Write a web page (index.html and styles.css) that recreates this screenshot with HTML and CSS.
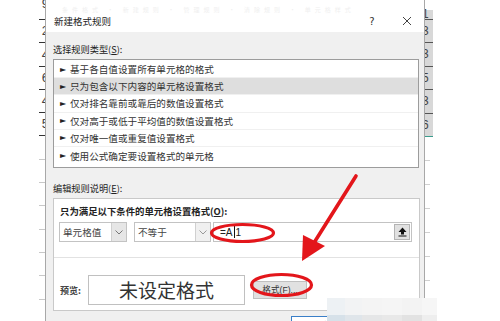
FILE: index.html
```html
<!DOCTYPE html>
<html>
    <head>
        <title>新建格式规则</title>
        <meta charset="utf-8" />
        <link rel="stylesheet" href="styles.css">
    </head>
    <body>
        <div class="page">
            <div class="sheet-left">
                <div class="row-num first"><span class="digit">9</span><span class="tick"></span></div>
                <div class="row-num"><span class="digit">2</span><span class="tick"></span></div>
                <div class="row-num"><span class="digit">4</span><span class="tick"></span></div>
                <div class="row-num"><span class="digit">6</span><span class="tick"></span></div>
                <div class="row-num"><span class="digit">4</span><span class="tick"></span></div>
                <div class="row-num"><span class="digit">5</span><span class="tick"></span></div>
                <div class="row-num faint"><span class="digit"></span><span class="tick"></span></div>
                <div class="row-num faint"><span class="digit"></span><span class="tick"></span></div>
                <div class="row-num faint"><span class="digit"></span><span class="tick"></span></div>
                <div class="row-num faint"><span class="digit"></span><span class="tick"></span></div>
                <div class="row-num faint"><span class="digit"></span><span class="tick"></span></div>
                <div class="row-num faint"><span class="digit"></span><span class="tick"></span></div>
                <div class="row-num faint"><span class="digit"></span><span class="tick"></span></div>
            </div>

            <div class="dialog">
                <div class="titlebar">
                    <div class="ghost">条件格式 · 新建规则 · 管理规则 · 清除规则 · 单元格样式</div>
                    <div class="title-row">
                        <span class="title">新建格式规则</span>
                        <span class="tb-btn">?</span>
                        <span class="tb-btn close">
                            <svg width="10" height="10" viewBox="0 0 10 10">
                                <path d="M1 1 L9 9 M9 1 L1 9" stroke="#444" stroke-width="1" fill="none" />
                            </svg>
                        </span>
                    </div>
                </div>

                <div class="body">
                    <div class="label first">选择规则类型(<u>S</u>):</div>
                    <ul class="rule-list">
                        <li><span class="tri">►</span>基于各自值设置所有单元格的格式</li>
                        <li class="selected"><span class="tri">►</span>只为包含以下内容的单元格设置格式</li>
                        <li><span class="tri">►</span>仅对排名靠前或靠后的数值设置格式</li>
                        <li><span class="tri">►</span>仅对高于或低于平均值的数值设置格式</li>
                        <li><span class="tri">►</span>仅对唯一值或重复值设置格式</li>
                        <li><span class="tri">►</span>使用公式确定要设置格式的单元格</li>
                    </ul>

                    <div class="label second">编辑规则说明(<u>E</u>):</div>
                    <div class="desc">
                        <div class="desc-title">只为满足以下条件的单元格设置格式(<u>O</u>):</div>
                        <div class="cond-row">
                            <div class="select s1">
                                <span class="sel-text">单元格值</span>
                                <span class="drop">
                                    <svg width="8" height="5" viewBox="0 0 8 5"><path d="M0.5 0.5 L4 4 L7.5 0.5" stroke="#777" fill="none" /></svg>
                                </span>
                            </div>
                            <div class="select s2">
                                <span class="sel-text">不等于</span>
                                <span class="drop light">
                                    <svg width="8" height="5" viewBox="0 0 8 5"><path d="M0.5 0.5 L4 4 L7.5 0.5" stroke="#999" fill="none" /></svg>
                                </span>
                            </div>
                            <div class="input">
                                <span class="formula">=A<span class="caret"></span>1</span>
                                <span class="ref-btn">
                                    <svg width="9" height="10" viewBox="0 0 9 10">
                                        <path d="M4.5 0.5 L8.5 5 H6 V7.5 H3 V5 H0.5 Z" fill="#111" />
                                        <path d="M0.5 9 H8.5" stroke="#111" stroke-width="1" />
                                    </svg>
                                </span>
                            </div>
                        </div>
                        <div class="sep"></div>
                        <div class="preview-row">
                            <span class="preview-label">预览:</span>
                            <div class="preview-box">未设定格式</div>
                            <div class="btn">格式(<u>F</u>)...</div>
                        </div>
                    </div>
                    <div class="footer">
                        <div class="ok-btn">确定</div>
                        <div class="cancel-btn">取消</div>
                    </div>
                </div>
            </div>

            <div class="sheet-right">
                <div class="cell top"><span>1</span></div>
                <div class="cell"><span>3</span></div>
                <div class="cell"><span>3</span></div>
                <div class="cell"><span>5</span></div>
                <div class="cell"><span>3</span></div>
                <div class="cell last"><span>6</span></div>
                <div class="rtick"></div>
                <div class="rtick"></div>
                <div class="rtick"></div>
                <div class="rtick"></div>
                <div class="rtick"></div>
                <div class="rtick"></div>
            </div>
        </div>

        <!-- blurred corner of the original screenshot -->
        <div class="mosaic">
            <span style="background:#edf1f4"></span>
            <span style="background:#f2f3f4"></span>
            <span style="background:#f4f4f4"></span>
            <span style="background:#f5f5f5"></span>
            <span style="background:#f3f3f3"></span>
            <span style="background:#f6f6f6"></span>
            <span style="background:#d6e1e9"></span>
            <span style="background:#dfe5ea"></span>
            <span style="background:#e5e6e7"></span>
            <span style="background:#e8e8e8"></span>
            <span style="background:#e2e2e2"></span>
            <span style="background:#eeeeee"></span>
        </div>

        <!-- red hand-drawn marks -->
        <svg class="marks" width="500" height="321" viewBox="0 0 500 321">
            <ellipse cx="242.5" cy="233" rx="31" ry="8.5" fill="none" stroke="#e3161b" stroke-width="3.2" />
            <ellipse cx="281.5" cy="285" rx="30" ry="10.5" fill="none" stroke="#e3161b" stroke-width="3.2" />
            <path d="M356 176 L312 246" stroke="#e3161b" stroke-width="3.6" stroke-linecap="round" fill="none" />
            <path d="M302 261 L303 235 L325 246 Z" fill="#e3161b" />
        </svg>
    </body>
</html>
```

FILE: styles.css
```css
html,
body {
    margin: 0;
    padding: 0;
}

body {
    width: 500px;
    height: 321px;
    overflow: hidden;
    position: relative;
    background-color: #fff;
    color: #333;
    font-family: 'Noto Sans CJK SC', 'Noto Sans', sans-serif;
}

u {
    text-decoration: underline;
    text-underline-offset: 1px;
}

.page {
    display: flex;
    height: 321px;
}

/* spreadsheet edges around the dialog */
.sheet-left {
    width: 45px;
    flex: none;
    overflow: hidden;
}

.row-num {
    height: 23.3px;
    display: flex;
    flex-direction: column;
    align-items: flex-end;
    justify-content: flex-end;
}

.row-num.first {
    height: 20px;
}

.digit {
    height: 22px;
    line-height: 22px;
    font-family: 'Liberation Sans', sans-serif;
    font-size: 13px;
    color: #444;
    margin-right: -4px;
}

.row-num.first .digit {
    height: 19px;
    line-height: 8px;
}

.tick {
    width: 6px;
    height: 1px;
    background-color: #333;
}

.row-num.faint .tick {
    background-color: #c8c8c8;
}

.sheet-right {
    width: 8px;
    flex: none;
    overflow: hidden;
    padding-top: 10px;
}

.cell {
    height: 22.4px;
    background-color: #d8d8d8;
    border-bottom: 1px solid #555;
    font-family: 'Liberation Sans', sans-serif;
    font-size: 12px;
    line-height: 22px;
    color: #444;
}

.cell span {
    margin-left: -3px;
}

.cell.top {
    height: 9px;
    line-height: 9px;
}

.cell.last {
    border-bottom-color: #3a9c8c;
}

.rtick {
    height: 23px;
    width: 5px;
    border-bottom: 1px solid #d0d0d0;
}

/* dialog */
.dialog {
    width: 378px;
    flex: none;
    border-left: 1px solid #a8a8a8;
    border-right: 1px solid #a8a8a8;
    background-color: #f0f0f0;
    display: flex;
    flex-direction: column;
}

.titlebar {
    height: 33px;
    background-color: #fff;
    box-sizing: border-box;
    display: flex;
    flex-direction: column;
    justify-content: space-between;
    padding-bottom: 4px;
}

.ghost {
    padding: 6px 0 0 16px;
    font-size: 6px;
    line-height: 8px;
    color: #efefef;
    letter-spacing: 4px;
    white-space: nowrap;
    overflow: hidden;
}

.title-row {
    display: flex;
    align-items: center;
    height: 14px;
    padding-left: 8px;
}

.title {
    flex: 1;
    font-size: 9.5px;
    color: #222;
}

.tb-btn {
    width: 20px;
    text-align: center;
    font-family: 'DejaVu Sans', sans-serif;
    font-size: 10px;
    color: #333;
    display: flex;
    justify-content: center;
    align-items: center;
}

.tb-btn.close {
    margin-left: 15px;
    margin-right: 7px;
}

.body {
    flex: 1;
    padding: 0 5px 0 7px;
    display: flex;
    flex-direction: column;
}

.label {
    font-size: 9.2px;
    line-height: 14px;
    color: #222;
}

.label.first {
    margin-top: 10px;
    margin-bottom: 3px;
}

.label.second {
    margin-top: 12.5px;
    margin-bottom: 3.5px;
}

.rule-list {
    list-style: none;
    margin: 0;
    padding: 1px 0 1px;
    height: 105px;
    background-color: #fff;
    border: 1px solid #9c9c9c;
}

.rule-list li {
    height: 17.2px;
    box-sizing: border-box;
    display: flex;
    align-items: center;
    padding-left: 6px;
    font-size: 9.6px;
    color: #333;
    border-bottom: 1px solid #f0f0f0;
    white-space: nowrap;
}

.rule-list li:last-child {
    border-bottom: none;
}

.rule-list li.selected {
    background-color: #dedede;
}

.tri {
    font-family: 'DejaVu Sans', sans-serif;
    font-size: 8px;
    width: 10px;
    color: #222;
}

.desc {
    height: 111px;
    margin-right: -1px;
    background-color: #fff;
    border: 1px solid #c9c9c9;
    display: flex;
    flex-direction: column;
}

.desc-title {
    margin: 6px 0 0 6px;
    font-size: 9.4px;
    line-height: 13px;
    font-weight: bold;
    color: #222;
}

.cond-row {
    display: flex;
    margin: 4px 0 0 5px;
    height: 20px;
}

.select {
    display: flex;
    box-sizing: border-box;
    border: 1px solid #c3c3c3;
    background-color: #fff;
}

.select.s1 {
    width: 68px;
}

.select.s2 {
    width: 77px;
    margin-left: 7px;
}

.sel-text {
    flex: 1;
    padding-left: 3px;
    font-size: 9.6px;
    line-height: 18px;
    color: #444;
}

.drop {
    width: 14px;
    background-color: #e6e6e6;
    border-left: 1px solid #d0d0d0;
    display: flex;
    align-items: center;
    justify-content: center;
}

.drop.light {
    background-color: #f0f0f0;
}

.input {
    width: 199px;
    margin-left: 2px;
    box-sizing: border-box;
    border: 1px solid #c3c3c3;
    display: flex;
    align-items: center;
    justify-content: space-between;
}

.formula {
    padding-left: 6px;
    font-family: 'Liberation Sans', sans-serif;
    font-size: 10px;
    color: #222;
    display: flex;
    align-items: center;
}

.caret {
    width: 1px;
    height: 12px;
    background-color: #111;
    margin: 0 1px;
}

.ref-btn {
    width: 16px;
    height: 16px;
    margin-right: 1px;
    box-sizing: border-box;
    background-color: #e1e1e1;
    border: 1px solid #b4b4b4;
    display: flex;
    align-items: center;
    justify-content: center;
}

.sep {
    height: 1px;
    margin-top: 15px;
    background-color: #e2e2e2;
}

.preview-row {
    display: flex;
    align-items: center;
    margin: 17px 0 0 6px;
    height: 30px;
}

.preview-label {
    width: 28px;
    font-size: 9px;
    font-weight: bold;
    color: #444;
}

.preview-box {
    width: 157px;
    height: 30px;
    box-sizing: border-box;
    border: 1px solid #c0c0c0;
    font-size: 19px;
    line-height: 28px;
    text-align: center;
    color: #333;
}

.btn {
    width: 54px;
    height: 18px;
    margin-left: 8px;
    box-sizing: border-box;
    background-color: #e1e1e1;
    border: 1px solid #c0c0c0;
    font-family: 'Liberation Sans', 'Noto Sans CJK SC', sans-serif;
    font-size: 8.6px;
    line-height: 16px;
    text-align: center;
    white-space: nowrap;
    color: #333;
}

.footer {
    display: flex;
    justify-content: flex-end;
    gap: 8px;
    margin-top: 5px;
}

.ok-btn,
.cancel-btn {
    width: 60px;
    height: 20px;
    box-sizing: border-box;
    font-size: 9px;
    line-height: 18px;
    text-align: center;
    background-color: #e1e1e1;
    border: 1px solid #adadad;
}

.ok-btn {
    background-color: #fff;
    border: 1px solid #3a7fc8;
}

/* overlays */
.mosaic {
    position: absolute;
    left: 327px;
    top: 298px;
    width: 110px;
    height: 23px;
    display: grid;
    grid-template-columns: 18px 17px 20px 20px 20px 15px;
    grid-template-rows: 17px 6px;
}

.marks {
    position: absolute;
    left: 0;
    top: 0;
    pointer-events: none;
}
```
